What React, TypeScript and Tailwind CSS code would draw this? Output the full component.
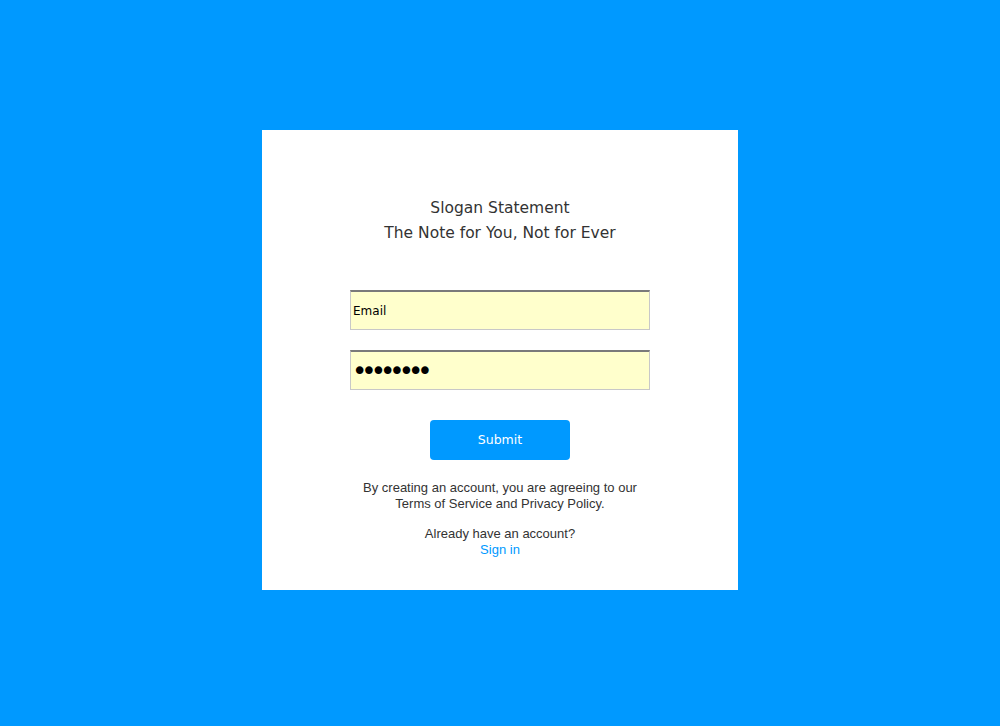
import React from 'react';

export default function App() {
  return (
    <div className="flex h-[726px] w-[1000px] items-start justify-center bg-[#0099ff] pt-[130px]">
      <div className="flex h-[460px] w-[476px] flex-col items-center bg-white pt-[66px]">
        <div className="text-center font-['DejaVu_Sans',sans-serif] text-[15.5px] leading-[25px] text-[#333]">
          <p>Slogan Statement</p>
          <p>The Note for You, Not for Ever</p>
        </div>

        <form className="mt-[44px] flex flex-col items-center" onSubmit={(e) => e.preventDefault()}>
          <input
            type="text"
            defaultValue="Email"
            className="h-10 w-[300px] border border-[#c8c8c8] border-t-2 border-t-[#7a7a7a] bg-[#ffffcc] px-[2px] font-['DejaVu_Sans',sans-serif] text-[12px] text-black outline-none"
          />
          <input
            type="password"
            defaultValue="password"
            className="mt-5 h-10 w-[300px] border border-[#c8c8c8] border-t-2 border-t-[#7a7a7a] bg-[#ffffcc] px-[1px] font-['DejaVu_Sans',sans-serif] text-[26px] tracking-[-6px] text-black outline-none"
          />
          <button
            type="submit"
            className="mt-[30px] h-10 w-[140px] rounded-[4px] bg-[#0099ff] font-['DejaVu_Sans',sans-serif] text-[12.5px] text-white"
          >
            Submit
          </button>
        </form>

        <p className="mt-5 text-center font-['Liberation_Sans',Arial,sans-serif] text-[13px] leading-4 text-[#333]">
          By creating an account, you are agreeing to our
          <br />
          Terms of Service and Privacy Policy.
        </p>
        <p className="mt-[14px] text-center font-['Liberation_Sans',Arial,sans-serif] text-[13px] leading-4 text-[#333]">
          Already have an account?
          <br />
          <a href="#" className="text-[#0099ff]">
            Sign in
          </a>
        </p>
      </div>
    </div>
  );
}
